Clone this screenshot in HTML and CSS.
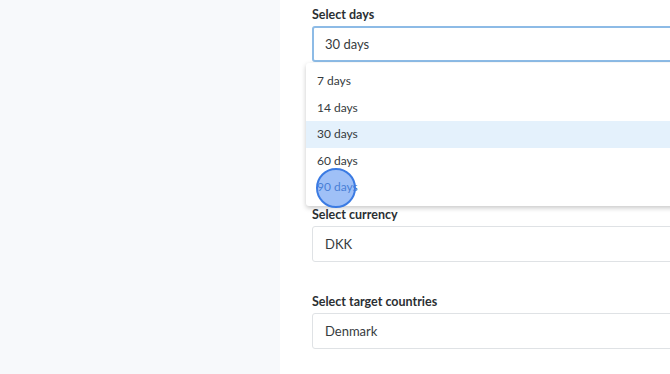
FILE: index.html
```html
<!DOCTYPE html>
<html lang="en">
<head>
    <meta charset="UTF-8">
    <meta name="viewport" content="width=device-width, initial-scale=1.0">
    <title>Campaign Settings</title>
    <link rel="stylesheet" href="styles.css">
</head>
<body>

    <div class="layout">
        <aside class="sidebar"></aside>

        <main class="content">
            <div class="field">
                <label class="field-label">Select days</label>
                <div class="select-box focused">30 days</div>
                <ul class="dropdown">
                    <li class="option">7 days</li>
                    <li class="option">14 days</li>
                    <li class="option active">30 days</li>
                    <li class="option">60 days</li>
                    <li class="option hovered">90 days<span class="click-ring"></span></li>
                </ul>
            </div>

            <div class="field">
                <label class="field-label">Select currency</label>
                <div class="select-box">DKK</div>
            </div>

            <div class="field">
                <label class="field-label">Select target countries</label>
                <div class="select-box">Denmark</div>
            </div>
        </main>
    </div>

</body>
</html>
```

FILE: styles.css
```css
:root {
    --text-color: #363b40;
    --label-color: #2b2f33;
    --border-color: #dfe2e5;
    --focus-color: #8dbbe6;
    --sidebar-bg: #f7f9fb;
    --highlight-bg: #e4f1fc;
}

html, body {
    margin: 0;
    height: 100%;
    overflow: hidden;
}

body {
    font-family: Lato, 'Open Sans', sans-serif;
    color: var(--text-color);
    background: white;
}

.layout {
    display: flex;
    height: 100%;
}

.sidebar {
    width: 280px;
    flex-shrink: 0;
    background: var(--sidebar-bg);
}

/* fields run on past the right edge of the window */
.content {
    flex: 1;
    padding: 7px 0 0 32px;
    min-width: 0;
    overflow: hidden;
}

.field {
    margin-right: -40px;
    margin-bottom: 32px;
}

.field:first-child {
    margin-bottom: 1px;
}

.field-label {
    display: block;
    font-size: 12.5px;
    font-weight: 700;
    line-height: 16px;
    color: var(--label-color);
    margin-bottom: 3px;
}

.select-box {
    height: 34px;
    line-height: 34px;
    padding: 0 12px;
    border: 1px solid var(--border-color);
    border-radius: 3px;
    font-size: 13px;
}

.select-box.focused {
    border: 2px solid var(--focus-color);
    height: 32px;
    line-height: 32px;
    padding: 0 11px;
}

.dropdown {
    list-style: none;
    margin: 1px 0 0 -6px;
    padding: 5px 0;
    background: white;
    border-radius: 3px;
    box-shadow: 0 2px 5px rgba(0, 0, 0, 0.22);
}

.option {
    position: relative;
    height: 26.5px;
    line-height: 26.5px;
    padding: 0 11px;
    font-size: 12px;
}

.option.active {
    background: var(--highlight-bg);
}

.option.hovered {
    color: #3f6fb5;
}

.click-ring {
    position: absolute;
    left: 10px;
    top: -6px;
    width: 36px;
    height: 36px;
    border-radius: 50%;
    background: rgba(80, 140, 240, 0.55);
    border: 2px solid #3b7be3;
}
```
